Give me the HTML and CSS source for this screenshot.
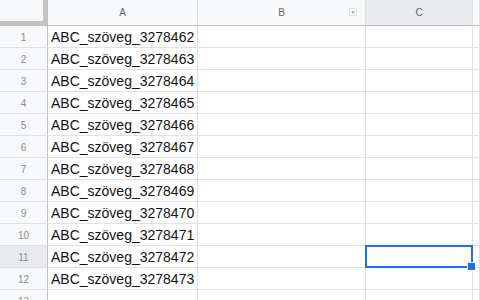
FILE: index.html
```html
<!DOCTYPE html>
<html lang="hu">

<head>
  <meta charset="UTF-8" />
  <meta name="viewport" content="width=device-width, initial-scale=1.0" />
  <title>Táblázat</title>
  <link rel="stylesheet" href="styles.css">
</head>

<body>
  <div class="sheet">
    <div class="corner"></div>
    <div class="col-head">A</div>
    <div class="col-head">B<span class="filter"></span></div>
    <div class="col-head current">C</div>
    <div class="col-head"></div>

    <div class="row-head">1</div><div class="cell">ABC_szöveg_3278462</div><div class="cell"></div><div class="cell"></div><div class="cell"></div>
    <div class="row-head">2</div><div class="cell">ABC_szöveg_3278463</div><div class="cell"></div><div class="cell"></div><div class="cell"></div>
    <div class="row-head">3</div><div class="cell">ABC_szöveg_3278464</div><div class="cell"></div><div class="cell"></div><div class="cell"></div>
    <div class="row-head">4</div><div class="cell">ABC_szöveg_3278465</div><div class="cell"></div><div class="cell"></div><div class="cell"></div>
    <div class="row-head">5</div><div class="cell">ABC_szöveg_3278466</div><div class="cell"></div><div class="cell"></div><div class="cell"></div>
    <div class="row-head">6</div><div class="cell">ABC_szöveg_3278467</div><div class="cell"></div><div class="cell"></div><div class="cell"></div>
    <div class="row-head">7</div><div class="cell">ABC_szöveg_3278468</div><div class="cell"></div><div class="cell"></div><div class="cell"></div>
    <div class="row-head">8</div><div class="cell">ABC_szöveg_3278469</div><div class="cell"></div><div class="cell"></div><div class="cell"></div>
    <div class="row-head">9</div><div class="cell">ABC_szöveg_3278470</div><div class="cell"></div><div class="cell"></div><div class="cell"></div>
    <div class="row-head">10</div><div class="cell">ABC_szöveg_3278471</div><div class="cell"></div><div class="cell"></div><div class="cell"></div>
    <div class="row-head current">11</div><div class="cell">ABC_szöveg_3278472</div><div class="cell"></div><div class="cell selected"></div><div class="cell"></div>
    <div class="row-head">12</div><div class="cell">ABC_szöveg_3278473</div><div class="cell"></div><div class="cell"></div><div class="cell"></div>
    <div class="row-head">13</div><div class="cell"></div><div class="cell"></div><div class="cell"></div><div class="cell"></div>
  </div>
</body>

</html>
```

FILE: styles.css
```css
* {
  box-sizing: border-box;
}

body {
  margin: 0;
  height: 300px;
  overflow: hidden;
  background: #fff;
  font-family: 'Liberation Sans', Arial, sans-serif;
}

.sheet {
  display: grid;
  grid-template-columns: 48px 150px 168px 107px 1fr;
  grid-template-rows: 26px;
  grid-auto-rows: 22px;
}

.corner {
  background: #f8f9fa;
  border-right: 1px solid #c0c0c0;
  border-bottom: 1px solid #c0c0c0;
  box-shadow: inset -4px -4px 0 #c4c4c4;
}

.col-head {
  position: relative;
  background: #f8f9fa;
  border-right: 1px solid #e0e0e0;
  border-bottom: 1px solid #c0c0c0;
  color: #666;
  font-size: 10px;
  text-align: center;
  line-height: 25px;
}

.row-head {
  background: #f8f9fa;
  border-right: 1px solid #c0c0c0;
  border-bottom: 1px solid #e0e0e0;
  color: #8c8c8c;
  font-size: 10px;
  text-align: center;
  padding-top: 2px;
  line-height: 19px;
}

.col-head.current,
.row-head.current {
  background: #e8eaed;
}

.filter {
  position: absolute;
  top: 8px;
  right: 8px;
  width: 8px;
  height: 8px;
  border: 1px solid #e3e3e3;
  background: #fff;
}

.filter::after {
  content: '';
  position: absolute;
  top: 2px;
  left: 1px;
  border-left: 2px solid transparent;
  border-right: 2px solid transparent;
  border-top: 3px solid #aaa;
}

.cell {
  position: relative;
  border-right: 1px solid #e2e2e2;
  border-bottom: 1px solid #e2e2e2;
  color: #111;
  font-size: 14px;
  padding: 2px 0 0 3px;
  line-height: 19px;
  white-space: nowrap;
  overflow: hidden;
}

.cell.selected {
  overflow: visible;
}

.cell.selected::before {
  content: '';
  position: absolute;
  top: -1px;
  left: -1px;
  right: -1px;
  bottom: -1px;
  border: 2px solid #1a73e8;
  z-index: 1;
}

.cell.selected::after {
  content: '';
  position: absolute;
  right: -4px;
  bottom: -4px;
  width: 7px;
  height: 7px;
  background: #1a73e8;
  border: 1px solid #fff;
  z-index: 2;
}
```
